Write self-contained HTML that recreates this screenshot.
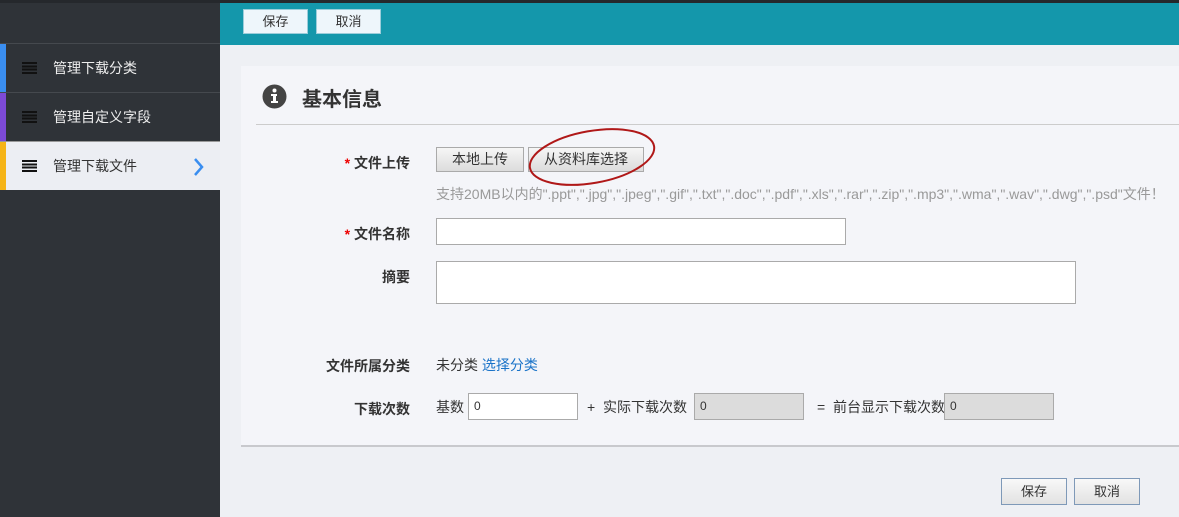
<!DOCTYPE html>
<html><head><meta charset="utf-8"><style>
*{margin:0;padding:0;box-sizing:border-box}
body{width:1179px;height:517px;overflow:hidden;background:#eef0f4;font-family:"Liberation Sans","Noto Sans CJK SC",sans-serif;font-size:14px;color:#333;position:relative}
.abs{position:absolute}
.side{left:0;top:0;width:220px;height:517px;background:#2f3338}
.topline{left:0;top:0;width:1179px;height:3px;background:#25282c}
.item{left:0;width:220px;height:49px;border-top:1px solid #45494e;color:#eee;font-size:14px}
.item .strip{position:absolute;left:0;top:0;width:6px;height:100%}
.item .ic{position:absolute;left:22px;top:18px;width:15px;height:12px;background:repeating-linear-gradient(#111 0 2px,transparent 2px 3.3px)}
.item span.t{position:absolute;left:53px;top:14px}
.bar{left:220px;top:3px;width:959px;height:42px;background:#1497ab}
.tbtn{top:9px;width:65px;height:25px;background:#eef6fb;border:1px solid #9ccdda;font-size:13px;text-align:center;line-height:23px;color:#333}
.panel{left:241px;top:66px;width:938px;height:381px;background:#f4f5f9;border-bottom:2px solid #c8c9cd}
.lbl{font-weight:bold;font-size:14px;text-align:right;width:120px;left:290px;color:#333}
.btn{height:25px;border:1px solid #aaa;background:linear-gradient(#f6f6f6,#dcdcdc);font-size:14px;text-align:center;line-height:23px;color:#333}
.inp{background:#fff;border:1px solid #aaa;height:27px;font-size:12px;padding-left:5px;line-height:25px}
.gray{background:#dcdcdc;border:1px solid #aaa}
.bbtn{top:478px;width:66px;height:27px;border:1px solid #7e99b8;background:linear-gradient(#f8f8f8,#e2e2e2);text-align:center;line-height:25px;font-size:13px}
</style></head><body>
<div class="abs side"></div>
<div class="abs topline"></div>
<div class="abs item" style="top:43px"><div class="strip" style="background:#3a8ef0"></div><div class="ic"></div><span class="t">管理下载分类</span></div>
<div class="abs item" style="top:92px"><div class="strip" style="background:#7d4ad6"></div><div class="ic"></div><span class="t">管理自定义字段</span></div>
<div class="abs item" style="top:141px;background:#eceef3;color:#333;border-top:1px solid #999"><div class="strip" style="background:#f5b417"></div><div class="ic"></div><span class="t">管理下载文件</span>
<svg style="position:absolute;left:193px;top:15px" width="12" height="20"><path d="M2 2 L9 10 L2 18" stroke="#3a8ef0" stroke-width="2.5" fill="none"/></svg></div>
<div class="abs bar"></div>
<div class="abs tbtn" style="left:243px">保存</div>
<div class="abs tbtn" style="left:316px">取消</div>
<div class="abs panel"></div>
<svg class="abs" style="left:262px;top:84px" width="25" height="25"><circle cx="12.5" cy="12.5" r="12" fill="#444"/><circle cx="12.5" cy="6.5" r="2" fill="#fff"/><rect x="9" y="10" width="6" height="2" fill="#fff"/><rect x="11" y="10" width="3" height="9" fill="#fff"/><rect x="9" y="17" width="7" height="2" fill="#fff"/></svg>
<div class="abs" style="left:302px;top:83px;font-size:20px;font-weight:bold;color:#333">基本信息</div>
<div class="abs" style="left:256px;top:124px;width:923px;height:1px;background:#ccc"></div>
<div class="abs lbl" style="top:153px"><span style="color:#e00">*</span> 文件上传</div>
<div class="abs btn" style="left:436px;top:147px;width:88px">本地上传</div>
<div class="abs btn" style="left:528px;top:147px;width:116px">从资料库选择</div>
<svg class="abs" style="left:525px;top:126px" width="135" height="62"><ellipse cx="67" cy="31" rx="63" ry="26" transform="rotate(-10 67 31)" stroke="#b01818" stroke-width="2" fill="none"/></svg>
<div class="abs" style="left:436px;top:184px;font-size:14px;color:#999;white-space:nowrap">支持20MB以内的".ppt",".jpg",".jpeg",".gif",".txt",".doc",".pdf",".xls",".rar",".zip",".mp3",".wma",".wav",".dwg",".psd"文件！</div>
<div class="abs lbl" style="top:224px"><span style="color:#e00">*</span> 文件名称</div>
<div class="abs inp" style="left:436px;top:218px;width:410px"></div>
<div class="abs lbl" style="top:267px">摘要</div>
<div class="abs inp" style="left:436px;top:261px;width:640px;height:43px"></div>
<div class="abs lbl" style="top:356px">文件所属分类</div>
<div class="abs" style="left:436px;top:355px">未分类 <span style="color:#1a73c8">选择分类</span></div>
<div class="abs lbl" style="top:399px">下载次数</div>
<div class="abs" style="left:436px;top:397px">基数</div>
<div class="abs inp" style="left:468px;top:393px;width:110px">0</div>
<div class="abs" style="left:587px;top:397px">+&nbsp; 实际下载次数</div>
<div class="abs inp gray" style="left:694px;top:393px;width:110px">0</div>
<div class="abs" style="left:817px;top:397px">= &nbsp;前台显示下载次数</div>
<div class="abs inp gray" style="left:944px;top:393px;width:110px">0</div>
<div class="abs bbtn" style="left:1001px">保存</div>
<div class="abs bbtn" style="left:1074px">取消</div>
</body></html>
